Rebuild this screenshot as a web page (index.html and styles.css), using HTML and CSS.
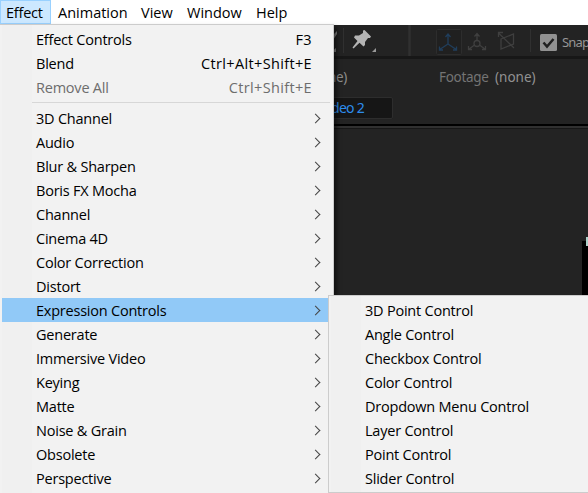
FILE: index.html
```
<!DOCTYPE html>
<html lang="en">
<head>
<meta charset="utf-8">
<title>Effect menu</title>
<link rel="stylesheet" href="styles.css">
</head>
<body>
<div class="app">
  <nav class="menubar">
    <span class="menubar-item active">Effect</span>
    <span class="menubar-item animation">Animation</span>
    <span class="menubar-item view">View</span>
    <span class="menubar-item window">Window</span>
    <span class="menubar-item help">Help</span>
  </nav>
  <main class="workspace">
    <div class="toolbar">
      <svg class="tool-icons" width="231" height="31" viewBox="0 0 231 31">
        <path d="M0 12L6 6V9L0 18Z" fill="#858585"/>
        <path d="M0 27L5 23V27Z" fill="#858585"/>
        <path d="M12.500 3V28" stroke="#303030"/>
        <path d="M33.500 5L40 11.500L39 13L37 13L34 17L34 20L32.500 21.500L28.500 17.800L22.500 23.500L21.500 22.500L26.500 16L23 12.500L24 10.500L28 10.500L32 8L32 5.500Z" fill="#b4b4b4"/>
        <path d="M41 27H45V23Z" fill="#999"/>
        <path d="M78.500 0V31" stroke="#303030" stroke-width="2.500"/>
        <rect x="105.500" y="4.500" width="25" height="25" rx="1" fill="#202020" stroke="#2d2d2d"/>
        <g fill="none" stroke="#203e5c" stroke-width="1.300">
          <path d="M117 9V19L108 25M117 19L126 25M114.500 12L117 9L119.500 12M108.500 21.500V25H112M125.500 21.500V25H122"/>
        </g>
        <g fill="none" stroke="#3f3f3f" stroke-width="1.300">
          <path d="M146 8.500V15.500M143.500 11.500L146 8.500L148.500 11.500M143.500 20L137.500 24.500M148.500 20L154.500 24.500M137.500 21V24.500H141M154.500 21V24.500H151"/>
          <circle cx="146" cy="18.500" r="3"/>
          <path d="M170 14L182.500 9V19L170 24ZM167.500 8L183 23M167.500 12V7.500H172"/>
        </g>
        <path d="M199.500 4V27" stroke="#303030"/>
        <rect x="209" y="9" width="17" height="17" rx="1.500" fill="#919191"/>
        <path d="M212.500 17.500L216 21.500L222.500 14" stroke="#202020" stroke-width="2.500" fill="none"/>
      </svg>
      <span class="snap">Snap</span>
    </div>
    <div class="viewer-head">
      <div class="tabs"><span class="layer-tab">ne)</span><span class="footage">Footage</span><span class="none">(none)</span></div>
      <div class="comp-tab">deo 2</div>
    </div>
    <div class="canvas"></div>
  </main>

  <section class="menu main-menu">
    <div class="row"><span class="label">Effect Controls</span><span class="key">F3</span></div>
    <div class="row"><span class="label">Blend</span><span class="key">Ctrl+Alt+Shift+E</span></div>
    <div class="row disabled"><span class="label">Remove All</span><span class="key">Ctrl+Shift+E</span></div>
    <div class="separator"></div>
    <div class="row sub"><span class="label">3D Channel</span></div>
    <div class="row sub"><span class="label">Audio</span></div>
    <div class="row sub"><span class="label">Blur &amp; Sharpen</span></div>
    <div class="row sub"><span class="label">Boris FX Mocha</span></div>
    <div class="row sub"><span class="label">Channel</span></div>
    <div class="row sub"><span class="label">Cinema 4D</span></div>
    <div class="row sub"><span class="label">Color Correction</span></div>
    <div class="row sub"><span class="label">Distort</span></div>
    <div class="row sub selected"><span class="label">Expression Controls</span></div>
    <div class="row sub"><span class="label">Generate</span></div>
    <div class="row sub"><span class="label">Immersive Video</span></div>
    <div class="row sub"><span class="label">Keying</span></div>
    <div class="row sub"><span class="label">Matte</span></div>
    <div class="row sub"><span class="label">Noise &amp; Grain</span></div>
    <div class="row sub"><span class="label">Obsolete</span></div>
    <div class="row sub"><span class="label">Perspective</span></div>
  </section>

  <section class="menu submenu">
    <div class="row"><span class="label">3D Point Control</span></div>
    <div class="row"><span class="label">Angle Control</span></div>
    <div class="row"><span class="label">Checkbox Control</span></div>
    <div class="row"><span class="label">Color Control</span></div>
    <div class="row"><span class="label">Dropdown Menu Control</span></div>
    <div class="row"><span class="label">Layer Control</span></div>
    <div class="row"><span class="label">Point Control</span></div>
    <div class="row"><span class="label">Slider Control</span></div>
  </section>
</div>
</body>
</html>
```
FILE: styles.css
```
* { box-sizing: border-box; }
body { margin: 0; overflow: hidden; }
.app {
  position: relative;
  width: 588px;
  height: 493px;
  overflow: hidden;
  background: #232323;
  color: #000;
  font: 14.5px/24px "Open Sans", "Noto Sans", sans-serif;
  letter-spacing: -0.22px;
}
.menubar { display: flex; height: 25px; background: #fff; }
.menubar-item { height: 24px; line-height: 25px; padding-left: 7px; white-space: nowrap; }
.active { width: 51px; padding-left: 5px; background: #cce8ff; border: 1px solid #99d1ff; line-height: 23px; }
.animation { width: 83px; letter-spacing: 0; }
.view { width: 46px; letter-spacing: 0; }
.window { width: 69px; letter-spacing: 0; }
.help { letter-spacing: 0; }
.workspace { display: flex; flex-direction: column; height: 468px; margin-left: 331px; font-family: "Noto Sans", sans-serif; }
.toolbar { display: flex; height: 34px; border-bottom: 3px solid #171717; overflow: hidden; }
.tool-icons { flex: none; }
.snap { color: #969696; font-size: 13px; letter-spacing: -0.8px; line-height: 35px; }
.viewer-head { height: 70px; border-bottom: 1px solid #171717; box-shadow: inset 0 -2px #303030, inset 0 -4px #000; }
.tabs { display: flex; height: 38px; line-height: 36px; font-size: 13.5px; letter-spacing: -0.3px; color: #8d8d8d; }
.layer-tab { width: 108px; text-indent: -3px; }
.footage { width: 56px; color: #747474; }
.none { color: #929292; letter-spacing: 0; }
.comp-tab {
  width: 62px;
  height: 22px;
  border: 1px solid #2d2d2d;
  border-radius: 2px;
  background: #161616;
  color: #2d8ceb;
  font-size: 14px;
  letter-spacing: -0.7px;
  line-height: 20px;
  text-indent: -1px;
}
.canvas { flex: 1; background: linear-gradient(#add0c9, #add0c9) 255px 108px / 2px 9px no-repeat, linear-gradient(#000, #000) 251px 112px / 6px 300px no-repeat; }
.menu { position: absolute; border: 1px solid #ccc; background: linear-gradient(90deg, #f2f2f2 2px, #f0f0f0 2px, #f0f0f0 32px, #f2f2f2 32px); }
.main-menu { left: 0; top: 24px; width: 334px; height: 475px; padding: 2px; border-left: 0; box-shadow: 3px 3px 4px rgba(0, 0, 0, 0.5); }
.submenu { left: 328px; top: 295px; width: 290px; height: 198px; padding: 2px; }
.row { display: flex; justify-content: space-between; height: 24px; padding: 0 19px 0 34px; line-height: 26px; white-space: nowrap; }
.key { letter-spacing: 0.35px; }
.sub { padding-right: 12px; }
.sub::after { content: ""; width: 6px; height: 6px; margin: 9px 0 0; border: solid #444; border-width: 1.4px 1.4px 0 0; transform: rotate(45deg); }
.selected { background: #91c9f7; }
.disabled { color: #6d6d6d; }
.separator { height: 7px; margin: 0 1px 0 30px; border-top: 3px solid transparent; background: linear-gradient(#d7d7d7, #d7d7d7) 0 0 / 100% 1px no-repeat; }
```
